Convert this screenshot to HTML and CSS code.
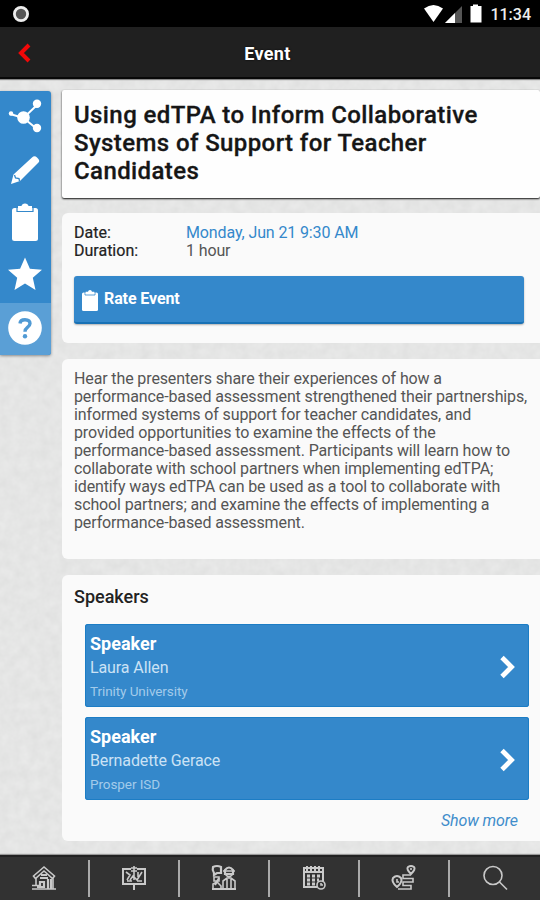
FILE: index.html
```
<!DOCTYPE html>
<html lang="en">
<head>
    <meta charset="UTF-8">
    <meta name="viewport" content="width=device-width, initial-scale=1.0">
    <title>Event</title>
    <link rel="stylesheet" href="styles.css">
</head>
<body>
    <!-- paper texture -->
    <svg class="texture" width="540" height="900">
        <filter id="paper" color-interpolation-filters="sRGB">
            <feTurbulence type="fractalNoise" baseFrequency="0.1" numOctaves="3" seed="4"/>
            <feColorMatrix values="0.05 0 0 0 0.872  0.05 0 0 0 0.874  0.05 0 0 0 0.872  0 0 0 0 1"/>
        </filter>
        <rect width="540" height="900" filter="url(#paper)"/>
    </svg>

    <div class="status-bar">
        <svg class="record" width="18" height="18" viewBox="0 0 18 18"><circle cx="9" cy="9" r="6.6" fill="#555" stroke="#eee" stroke-width="2.8"/></svg>
        <svg class="signals" width="60" height="20" viewBox="0 0 60 20">
            <path d="M1 4.5Q10.500 -2.500 20 4.500L10.500 18Z" fill="#fff"/>
            <path d="M22 19L39 2V19Z" fill="#555"/>
            <path d="M22 19L32 9V19Z" fill="#fff"/>
            <path d="M47.500 2H50V0.500H55V2H58.500V18.500H47.500Z" fill="#fff"/>
        </svg>
        <span class="clock">11:34</span>
    </div>

    <header class="nav-bar">
        <svg class="back" width="14" height="20" viewBox="0 0 14 20"><path d="M12 2L4 10L12 18" fill="none" stroke="#f20808" stroke-width="4"/></svg>
        <h1>Event</h1>
    </header>

    <main>
        <aside class="sidebar">
            <div class="tool">
                <svg width="34" height="34" viewBox="0 0 34 34"><path d="M2 13L15.500 17L29 4M15.500 17L29 28" fill="none" stroke="#fff" stroke-width="2"/><circle cx="3" cy="12.500" r="2.200" fill="#fff"/><circle cx="15.500" cy="16.500" r="6.300" fill="#fff"/><circle cx="29" cy="2.800" r="4.200" fill="#fff"/><circle cx="29" cy="27" r="4.200" fill="#fff"/></svg>
            </div>
            <div class="tool">
                <svg width="34" height="34" viewBox="0 0 34 34"><path d="M24 3.500Q26.500 1 29 3.500Q32.500 6.500 30.500 8.500L12 27L3 30L5.500 20.500Z" fill="#fff"/><path d="M6.500 21L7.500 24L11 24.500L11.500 27" fill="none" stroke="#3488cb" stroke-width="1.300"/></svg>
            </div>
            <div class="tool">
                <svg class="clipboard" width="34" height="38" viewBox="0 0 34 38"><rect x="4" y="5" width="26" height="33" rx="2.500" fill="#fff"/><path d="M9 4V8.500H25V4" fill="none" stroke="#3488cb" stroke-width="1.200"/><path d="M10 7V3H13.500Q14 0.500 17 0.500T20.500 3H24V7Z" fill="#fff"/></svg>
            </div>
            <div class="tool">
                <svg class="star" width="34" height="34" viewBox="0 0 34 34"><path d="M17 0.500L21.900 11.800L34 12.800L24.800 20.800L27.500 33L17 26.600L6.500 33L9.200 20.800L0 12.800L12.100 11.800Z" fill="#fff"/></svg>
            </div>
            <div class="tool help">
                <svg width="34" height="34" viewBox="0 0 34 34"><circle cx="17" cy="17" r="16.800" fill="#fff"/><path d="M12 12.500Q12.300 8.700 17 8.700Q22 8.800 22 12.500Q22 14.600 19.200 16.600Q17 18.200 17 20.700" fill="none" stroke="#509ad4" stroke-width="3.400"/><circle cx="17" cy="25.300" r="2.200" fill="#509ad4"/></svg>
            </div>
        </aside>

        <section class="content">
            <div class="title-card">
                <h2>Using edTPA to Inform Collaborative<br>Systems of Support for Teacher<br>Candidates</h2>
            </div>

            <div class="card info">
                <dl>
                    <dt>Date:</dt><dd class="date">Monday, Jun 21 9:30 AM</dd>
                    <dt>Duration:</dt><dd>1 hour</dd>
                </dl>
                <div class="rate-button">
                    <svg width="16" height="21" viewBox="0 0 16 21"><rect y="2.500" width="16" height="18.500" rx="1.500" fill="#fff"/><path d="M3 2V5H13V2" fill="none" stroke="#3488cb" stroke-width="0.800"/><path d="M3.700 4V1.700H6Q6.300 0 8 0T10 1.700H12.300V4Z" fill="#fff"/></svg>
                    <span>Rate Event</span>
                </div>
            </div>

            <div class="card description">
                <p>Hear the presenters share their experiences of how a<br>performance-based assessment strengthened their partnerships,<br>informed systems of support for teacher candidates, and<br>provided opportunities to examine the effects of the<br>performance-based assessment. Participants will learn how to<br>collaborate with school partners when implementing edTPA;<br>identify ways edTPA can be used as a tool to collaborate with<br>school partners; and examine the effects of implementing a<br>performance-based assessment.</p>
            </div>

            <div class="card speakers">
                <h3>Speakers</h3>
                <div class="speaker">
                    <div>
                        <h4>Speaker</h4>
                        <p class="name">Laura Allen</p>
                        <p class="school">Trinity University</p>
                    </div>
                    <svg width="16" height="24" viewBox="0 0 16 24"><path d="M3 2.500L12.500 12L3 21.500" fill="none" stroke="#fff" stroke-width="4.800"/></svg>
                </div>
                <div class="speaker">
                    <div>
                        <h4>Speaker</h4>
                        <p class="name">Bernadette Gerace</p>
                        <p class="school">Prosper ISD</p>
                    </div>
                    <svg width="16" height="24" viewBox="0 0 16 24"><path d="M3 2.500L12.500 12L3 21.500" fill="none" stroke="#fff" stroke-width="4.800"/></svg>
                </div>
                <a class="more">Show more</a>
            </div>
        </section>
    </main>

    <footer class="tab-bar">
        <!-- home -->
        <div class="tab"><svg width="26" height="26" viewBox="0 0 26 26"><path d="M2.500 11L13 2L23.500 11L21.500 13.500L13 6L4.500 13.500ZM5 13V20M22 13V24M1 24H25M1 20.500H8"/><path d="M9 23V17H13V23M17 24V14M20 24V14M9 13H17M10 10H16M6 22H13" stroke-width="2.200"/></svg></div>
        <!-- presentation board -->
        <div class="tab"><svg width="26" height="26" viewBox="0 0 26 26"><path d="M10 4H2V19H24V4H16M1 19H25M13 19V25" stroke-width="2"/><path d="M13 1V15M10 3H16M10 6H16M5 7L9 10L6 15M9 15L12 11L16 15L21 7M17 7V12M6 16H11M16 16H21"/></svg></div>
        <!-- people talking -->
        <div class="tab"><svg width="26" height="26" viewBox="0 0 26 26"><path d="M2 2Q6 0 10 2V8H6L3 10V8Q1 5 2 2ZM14 5Q18 0 22 5V9H14Z" stroke-width="2.200"/><path d="M12 6H24M14 9Q18 14 22 9M3 12H8V16H3ZM2 24V19L6 17L10 21V24M12 24V16L16 13H20L24 16V24M16 14V24M20 14V24"/><path d="M1 24H25M4 20L8 13" stroke-width="2"/></svg></div>
        <!-- schedule -->
        <div class="tab"><svg width="26" height="26" viewBox="0 0 26 26"><path d="M16 22H3V3H22V16M3 7H22M6 1V6M10 1V6M14 1V6M18 1V6" stroke-width="2"/><path d="M6 11H9M11 11H14M16 11H19M6 15H9M11 15H14M16 15H18M6 19H9M11 19H14" stroke-width="3"/><circle cx="20" cy="20" r="4"/><path d="M20 18V20H22"/></svg></div>
        <!-- route -->
        <div class="tab"><svg width="26" height="26" viewBox="0 0 26 26"><path d="M6 22Q0 17 2 13Q6 9 10 13Q12 17 6 22ZM20 9Q15 4 17 2Q20 0 23 2Q25 4 20 9Z" stroke-width="2"/><path d="M20 10H12V13.500H22V17H12V20.500H20V24H7M6 14V17H8M20 3V5"/></svg></div>
        <!-- search -->
        <div class="tab"><svg width="26" height="26" viewBox="0 0 26 26"><circle cx="11" cy="10.500" r="9"/><path d="M17.500 17L25 24.500"/></svg></div>
    </footer>
</body>
</html>
```
FILE: styles.css
```
* {
    box-sizing: border-box;
}
body {
    margin: 0;
    width: 540px;
    height: 900px;
    display: flex;
    flex-direction: column;
    overflow: hidden;
    background: #e5e5e4;
    font-family: Roboto, "Liberation Sans", sans-serif;
    white-space: nowrap;
}
h1, h2, h3, h4, p, dl, dd {
    margin: 0;
}
svg {
    display: block;
    flex: none;
    overflow: visible;
}
.texture {
    position: absolute;
    top: 0;
    left: 0;
    z-index: -1;
}

/* top bars */
.status-bar {
    display: flex;
    align-items: center;
    height: 27px;
    padding: 1px 9px 0 12px;
    background: #000;
    color: #eee;
}
.signals {
    margin-left: auto;
    margin-right: 7px;
}
.clock {
    font-size: 16px;
    font-weight: 500;
}
.nav-bar {
    display: grid;
    grid-template-columns: 44px 1fr 44px;
    align-items: center;
    height: 52px;
    padding-top: 2px;
    background: #202020;
    border-bottom: 2px solid #080808;
    box-shadow: 0 1px 1px #888;
}
.back {
    margin-left: 17px;
}
.nav-bar h1 {
    grid-column: 2;
    font-size: 18px;
    letter-spacing: 0.3px;
    font-weight: 700;
    text-align: center;
    padding-right: 5px;
    color: #fff;
    text-shadow: 0 0 2px #000;
}

main {
    display: flex;
    align-items: flex-start;
    flex: 1;
    gap: 11px;
    padding-top: 11px;
}

/* left tools */
.sidebar {
    flex: none;
    width: 51px;
    margin-top: 1px;
    background: #3488cb;
    border-radius: 0 3px 3px 0;
    box-shadow: 0 1px 3px rgba(0, 0, 0, 0.4);
}
.tool {
    height: 53px;
    display: flex;
    align-items: center;
    justify-content: center;
    padding-right: 2px;
}
.tool.help {
    height: 52px;
    padding-bottom: 3px;
    background: #5a9fd6;
    border-radius: 0 0 3px 0;
}
.clipboard {
    margin-bottom: 4px;
}
.star {
    margin-bottom: 6px;
}

/* cards */
.content {
    flex: 1;
    min-width: 0;
    display: flex;
    flex-direction: column;
}
.title-card {
    height: 108px;
    padding: 11px 12px;
    background: #fefefe;
    border-radius: 2px;
    box-shadow: 0 1px 2px #111;
}
.title-card h2 {
    font-size: 24px;
    line-height: 28px;
    letter-spacing: 0.4px;
    font-weight: 500;
    color: #161616;
    -webkit-text-stroke: 0.3px #161616;
}
.card {
    background: #fafafa;
    border-radius: 6px 0 0 6px;
}
.info {
    height: 130px;
    margin-top: 15px;
    padding: 11px 16px 0 12px;
}
.info dl {
    display: grid;
    grid-template-columns: 112px 1fr;
    font-size: 16px;
    line-height: 18px;
    letter-spacing: -0.12px;
    color: #555;
}
.info dt {
    color: #222;
    letter-spacing: 0;
    -webkit-text-stroke: 0.2px #222;
}
.info .date {
    color: #3488cb;
}
.rate-button {
    display: flex;
    align-items: center;
    gap: 6px;
    height: 48px;
    margin-top: 16px;
    padding-left: 8px;
    background: #3488cb;
    border-radius: 3px;
    border-bottom: 2px solid #1871b5;
    box-shadow: 0 1px 2px rgba(0, 0, 0, 0.3);
    color: #fff;
    font-size: 16px;
    font-weight: 700;
    letter-spacing: -0.1px;
}
.rate-button svg {
    margin-top: 3px;
}
.rate-button span {
    margin-top: -1px;
}
.description {
    height: 200px;
    margin-top: 16px;
    padding: 11px 12px;
    font-size: 16px;
    line-height: 18px;
    letter-spacing: -0.125px;
    color: #555;
}
.speakers {
    height: 266px;
    margin-top: 16px;
    padding: 11px 11px 0 12px;
    display: flex;
    flex-direction: column;
}
.speakers h3 {
    font-size: 18px;
    line-height: 21px;
    font-weight: 500;
    color: #222;
    margin-bottom: 17px;
}
.speaker {
    display: flex;
    align-items: center;
    justify-content: space-between;
    height: 83px;
    margin: 0 0 10px 11px;
    padding: 2px 14px 0 5px;
    background: #3488cb;
    border-radius: 3px;
    box-shadow: inset 0 0 0 1px #1c7dc5;
    color: #fff;
}
.speaker h4 {
    font-size: 18px;
    line-height: 24px;
    padding-top: 1px;
    font-weight: 700;
}
.name {
    font-size: 16px;
    line-height: 24px;
    letter-spacing: -0.1px;
    color: #cbe2f5;
}
.school {
    font-size: 13.500px;
    line-height: 23px;
    letter-spacing: -0.08px;
    color: #a3cbea;
}
.more {
    align-self: flex-end;
    margin-right: 11px;
    margin-top: 1px;
    font-size: 16px;
    line-height: 19px;
    letter-spacing: -0.1px;
    font-style: italic;
    color: #3f8dcb;
}

/* bottom tabs */
.tab-bar {
    display: grid;
    grid-template-columns: repeat(6, 1fr);
    height: 45px;
    padding-top: 3px;
    background: #323232;
    border-top: 2px solid #222;
    box-shadow: 0 -1px 1px #999;
}
.tab {
    height: 37px;
    display: flex;
    align-items: center;
    justify-content: center;
    padding-bottom: 2px;
    border-right: 2px solid #aaa;
}
.tab:last-child {
    border-right: 0;
}
.tab svg {
    fill: none;
    stroke: #c9c9c9;
    stroke-width: 1.600;
}
```
